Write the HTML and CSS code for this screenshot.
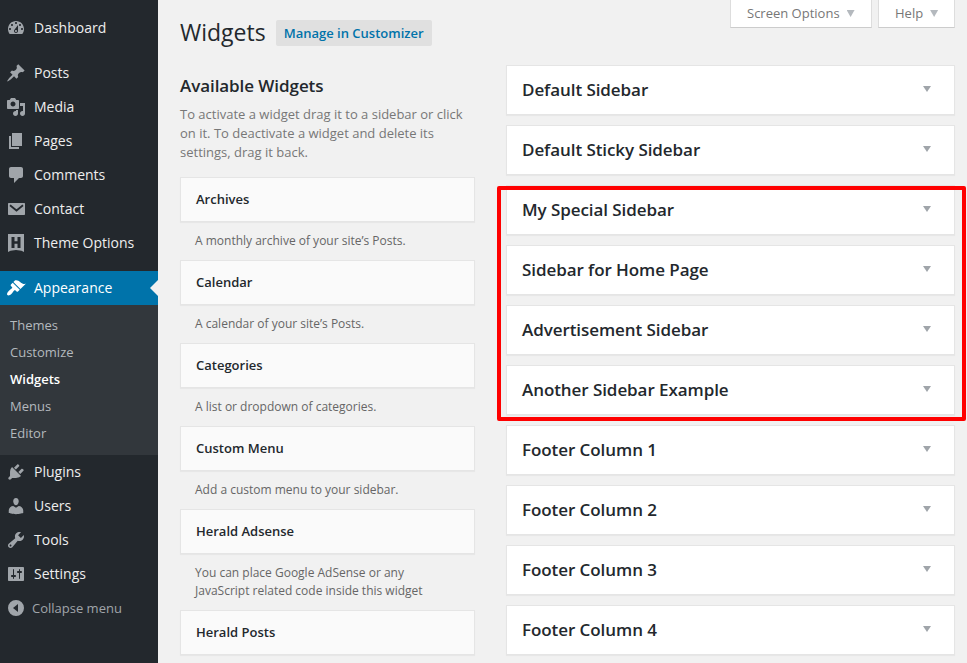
FILE: index.html
```html
<!DOCTYPE html>
<html lang="en">
<head>
<meta charset="utf-8">
<title>Widgets</title>
<link rel="stylesheet" href="styles.css">
</head>
<body>
<div class="admin">
  <nav class="menu">
    <a class="item"><svg viewBox="0 0 20 20"><path fill-rule="evenodd" d="M3.76 16h12.48c1.1-1.37 1.76-3.11 1.76-5 0-4.42-3.58-8-8-8s-8 3.58-8 8c0 1.89.66 3.63 1.76 5zM10 4c.55 0 1 .45 1 1s-.45 1-1 1-1-.45-1-1 .45-1 1-1zM6 6c.55 0 1 .45 1 1s-.45 1-1 1-1-.45-1-1 .45-1 1-1zm8 0c.55 0 1 .45 1 1s-.45 1-1 1-1-.45-1-1 .45-1 1-1zm-5.37 5.55L12 7v6c0 1.1-.9 2-2 2s-2-.9-2-2c0-.57.24-1.08.63-1.45zM4 10c.55 0 1 .45 1 1s-.45 1-1 1-1-.45-1-1 .45-1 1-1zm12 0c.55 0 1 .45 1 1s-.45 1-1 1-1-.45-1-1 .45-1 1-1zm-5 3c0-.55-.45-1-1-1s-1 .45-1 1 .45 1 1 1 1-.45 1-1z"/></svg>Dashboard</a>
    <div class="gap"></div>
    <a class="item"><svg viewBox="0 0 20 20"><path d="M10.44 3.02l1.82-1.82 6.36 6.35-1.83 1.82c-1.05-.68-2.48-.57-3.41.36l-.75.75c-.92.93-1.04 2.35-.35 3.41l-1.83 1.82-2.41-2.41-2.8 2.79c-.42.42-3.38 2.71-3.8 2.29s1.86-3.39 2.28-3.81l2.79-2.79L4.1 9.36l1.83-1.82c1.05.69 2.48.57 3.4-.36l.75-.75c.93-.92 1.05-2.35.36-3.41z"/></svg>Posts</a>
    <a class="item"><svg viewBox="0 0 20 20"><path fill-rule="evenodd" d="M13 11V4c0-.55-.45-1-1-1h-1.67L9 1H5L3.67 3H2c-.55 0-1 .45-1 1v7c0 .55.45 1 1 1h10c.55 0 1-.45 1-1zM7 4.5c1.38 0 2.5 1.12 2.5 2.5S8.38 9.5 7 9.5 4.5 8.38 4.5 7 5.62 4.5 7 4.5zM14 6h5v10.5c0 1.38-1.12 2.5-2.5 2.5S14 17.88 14 16.5s1.12-2.5 2.5-2.5c.17 0 .34.02.5.05V9h-3V6zm-4 8.05V13h2v3.5c0 1.38-1.12 2.5-2.5 2.5S7 17.88 7 16.5 8.12 14 9.5 14c.17 0 .34.02.5.05z"/></svg>Media</a>
    <a class="item"><svg viewBox="0 0 20 20"><path d="M6 15V2h10v13H6zm-1 1h8v2H3V5h2v11z"/></svg>Pages</a>
    <a class="item"><svg viewBox="0 0 20 20"><path d="M5 2h10c1.100 0 2 .9 2 2v7c0 1.100-.9 2-2 2h-2l-5 5v-5H5c-1.100 0-2-.9-2-2V4c0-1.100.9-2 2-2z"/></svg>Comments</a>
    <a class="item"><svg viewBox="0 0 20 20"><path d="M3 4h15c.6 0 1 .4 1 1v10c0 .6-.4 1-1 1H3c-.6 0-1-.4-1-1V5c0-.6.4-1 1-1z"/><path class="cut-line" d="M4 6.300l6.500 5.200L17 6.300"/></svg>Contact</a>
    <a class="item"><svg viewBox="0 0 20 20"><path d="M2 1h16v18l-2.500-1.200L10 17l-5.500.8L2 19z"/><path class="cut" d="M5.500 4h3v4.200h3V4h3v11h-3v-4.300h-3V15h-3z"/></svg>Theme Options</a>
    <div class="gap"></div>
    <a class="item current"><svg viewBox="0 0 20 20"><path d="M14.48 11.06L7.41 3.99l1.5-1.5c.5-.56 2.3-.47 3.51.32 1.21.8 1.43 1.28 2.91 2.1 1.18.64 2.45 1.26 4.45.85zm-.71.71L6.7 4.7 4.93 6.47c-.39.39-.39 1.02 0 1.41l1.06 1.06c.39.39.39 1.03 0 1.42-.6.6-1.43 1.11-2.21 1.69-.35.26-.7.53-1.01.84C1.43 14.23.4 16.08 1.4 17.07c.99 1 2.84-.03 4.18-1.36.31-.31.58-.66.85-1.02.57-.78 1.08-1.61 1.69-2.21.39-.39 1.02-.39 1.41 0l1.06 1.06c.39.39 1.02.39 1.41 0z"/></svg>Appearance</a>
    <div class="submenu">
      <a>Themes</a>
      <a>Customize</a>
      <a class="active">Widgets</a>
      <a>Menus</a>
      <a>Editor</a>
    </div>
    <a class="item"><svg viewBox="0 0 20 20"><path d="M13.11 4.36L9.87 7.6 8 5.73l3.24-3.24c.35-.34 1.05-.2 1.56.32.52.51.66 1.21.31 1.55zm-8 1.77l.91-1.12 9.01 9.01-1.19.84c-.71.71-2.63 1.16-3.82 1.16H6.14L4.9 17.26c-.59.59-1.54.59-2.12 0-.59-.58-.59-1.53 0-2.12l1.24-1.24v-3.88c0-1.13.4-3.19 1.09-3.89zm7.26 3.97l3.24-3.24c.34-.35 1.04-.21 1.55.31.52.51.66 1.21.31 1.55l-3.24 3.25z"/></svg>Plugins</a>
    <a class="item"><svg viewBox="0 0 20 20"><path d="M10 9.25c-2.27 0-2.73-3.44-2.73-3.44C7 4.02 7.82 2 9.970 2c2.160 0 2.980 2.020 2.710 3.810 0 0-.41 3.440-2.680 3.440zm0 2.570L12.720 10c2.390 0 4.520 2.330 4.520 4.530v2.490s-3.650 1.130-7.240 1.130c-3.650 0-7.240-1.130-7.240-1.130v-2.490c0-2.250 1.940-4.480 4.470-4.480z"/></svg>Users</a>
    <a class="item"><svg viewBox="0 0 20 20"><path fill-rule="evenodd" d="M16.68 9.77c-1.34 1.34-3.3 1.67-4.95.99l-5.41 6.52c-.99.99-2.59.99-3.58 0s-.99-2.59 0-3.57l6.52-5.42c-.68-1.65-.35-3.61.99-4.95 1.28-1.28 3.12-1.62 4.72-1.06l-2.89 2.89 2.82 2.82 2.86-2.87c.53 1.58.18 3.39-1.08 4.65zM3.81 16.21c.4.39 1.04.39 1.43 0 .4-.4.4-1.04 0-1.43-.39-.4-1.03-.4-1.43 0-.39.39-.39 1.03 0 1.43z"/></svg>Tools</a>
    <a class="item"><svg viewBox="0 0 20 20"><path fill-rule="evenodd" d="M18 16V4c0-.55-.45-1-1-1H3c-.55 0-1 .45-1 1v12c0 .55.45 1 1 1h14c.55 0 1-.45 1-1zM8 11h1c.55 0 1 .45 1 1s-.45 1-1 1H8v1.5c0 .28-.22.5-.5.5s-.5-.22-.5-.5V13H6c-.55 0-1-.45-1-1s.45-1 1-1h1V5.5c0-.28.22-.5.5-.5s.5.22.5.5V11zm5-2h-1c-.55 0-1-.45-1-1s.45-1 1-1h1V5.5c0-.28.22-.5.5-.5s.5.22.5.5V7h1c.55 0 1 .45 1 1s-.45 1-1 1h-1v5.500c0 .28-.22.5-.5.5s-.5-.22-.5-.5V9z"/></svg>Settings</a>
    <a class="item collapse"><svg viewBox="0 0 20 20"><path fill-rule="evenodd" d="M10 2a8 8 0 1 0 0 16a8 8 0 1 0 0-16zM12 6v8l-5-4z"/></svg>Collapse menu</a>
  </nav>

  <main class="content">
    <section class="available">
      <header class="title">
        <h1>Widgets</h1>
        <a class="customizer">Manage in Customizer</a>
      </header>
      <h2>Available Widgets</h2>
      <p class="intro">To activate a widget drag it to a sidebar or click on it. To deactivate a widget and delete its settings, drag it back.</p>
      <div class="widget">Archives</div>
      <p class="desc">A monthly archive of your site’s Posts.</p>
      <div class="widget">Calendar</div>
      <p class="desc">A calendar of your site’s Posts.</p>
      <div class="widget">Categories</div>
      <p class="desc">A list or dropdown of categories.</p>
      <div class="widget">Custom Menu</div>
      <p class="desc">Add a custom menu to your sidebar.</p>
      <div class="widget">Herald Adsense</div>
      <p class="desc">You can place Google AdSense or any JavaScript related code inside this widget</p>
      <div class="widget">Herald Posts</div>
    </section>

    <section class="sidebars">
      <div class="tabs">
        <a class="tab screen">Screen Options<i class="arrow"></i></a>
        <a class="tab help">Help<i class="arrow"></i></a>
      </div>
      <div class="area">Default Sidebar<i class="arrow"></i></div>
      <div class="area">Default Sticky Sidebar<i class="arrow"></i></div>
      <div class="marked">
        <div class="area">My Special Sidebar<i class="arrow"></i></div>
        <div class="area">Sidebar for Home Page<i class="arrow"></i></div>
        <div class="area">Advertisement Sidebar<i class="arrow"></i></div>
        <div class="area">Another Sidebar Example<i class="arrow"></i></div>
      </div>
      <div class="area">Footer Column 1<i class="arrow"></i></div>
      <div class="area">Footer Column 2<i class="arrow"></i></div>
      <div class="area">Footer Column 3<i class="arrow"></i></div>
      <div class="area">Footer Column 4<i class="arrow"></i></div>
    </section>
  </main>
</div>
</body>
</html>
```
FILE: styles.css
```css
* { box-sizing: border-box; }
body {
  margin: 0;
  background: #f1f1f1;
  font-family: "Open Sans", sans-serif;
  font-size: 13px;
  color: #23282d;
  overflow: hidden;
}
h1, h2, p { margin: 0; }
.admin { display: flex; height: 663px; }

.menu {
  flex: none;
  width: 158px;
  padding-top: 11px;
  background: #23282d;
}
.item {
  display: flex;
  align-items: center;
  gap: 8px;
  height: 34px;
  padding-left: 6px;
  color: #eee;
  font-size: 14px;
  line-height: 18px;
}
.item svg { flex: none; width: 20px; height: 20px; fill: #a0a5aa; }
.item .cut { fill: #23282d; }
.item .cut-line { fill: none; stroke: #23282d; stroke-width: 1.8; }
.gap { height: 11px; }
.current { position: relative; background: #0073aa; color: #fff; }
.current svg { fill: #fff; }
.current::after {
  content: "";
  position: absolute;
  right: 0;
  top: 9px;
  border: 8px solid transparent;
  border-left: 0;
  border-right-color: #f1f1f1;
}
.submenu { height: 150px; padding-top: 7px; background: #32373c; }
.submenu a {
  display: block;
  height: 27px;
  padding-left: 10px;
  line-height: 27px;
  color: #b4b9be;
}
.submenu .active { color: #fff; font-weight: 600; }
.item.collapse { gap: 6px; font-size: 13px; color: #a0a5aa; }

.content { display: flex; flex: 1; gap: 31px; padding-left: 22px; }
.available { width: 295px; flex: none; }
.title { display: flex; gap: 10px; padding-top: 18px; height: 74px; }
h1 { font-size: 23px; font-weight: 400; line-height: 29px; }
.customizer {
  height: 26px;
  margin-top: 2px;
  padding: 0 8px;
  border-radius: 2px;
  background: #e0e0e0;
  color: #0073aa;
  font-weight: 600;
  line-height: 26px;
}
h2 { font-size: 17px; font-weight: 600; line-height: 24px; letter-spacing: -.07px; }
.intro { margin: 7px 0 15px; color: #777; line-height: 19px; }
.widget {
  height: 45px;
  padding-left: 15px;
  border: 1px solid #e5e5e5;
  background: #fafafa;
  box-shadow: 0 1px 1px rgba(0, 0, 0, .04);
  font-weight: 600;
  line-height: 43px;
}
.desc { padding: 10px 15px; font-size: 12px; line-height: 18px; color: #666; }

.sidebars { width: 449px; flex: none; }
.tabs { display: flex; justify-content: flex-end; gap: 6px; height: 65px; }
.tab {
  display: flex;
  gap: 7px;
  height: 28px;
  padding-left: 16px;
  border: 1px solid #ddd;
  border-top: 0;
  border-bottom-color: #ccc;
  background: #fff;
  color: #777;
  line-height: 26px;
}
.screen { width: 142px; }
.help { width: 77px; }
.arrow {
  width: 8px;
  height: 6px;
  margin-bottom: 2px;
  background: #a0a5aa;
  clip-path: polygon(0 0, 100% 0, 50% 100%);
}
.tab .arrow { height: 7px; margin-top: 10px; background: #b4b9be; }
.area {
  display: flex;
  justify-content: space-between;
  align-items: center;
  height: 50px;
  margin-bottom: 10px;
  padding: 0 23px 0 15px;
  border: 1px solid #e5e5e5;
  background: #fff;
  box-shadow: 0 1px 1px rgba(0, 0, 0, .04);
  font-size: 17px;
  font-weight: 600;
  line-height: 24px;
  letter-spacing: -.07px;
}
.marked { position: relative; }
.marked::after {
  content: "";
  position: absolute;
  top: 1px;
  right: -11px;
  bottom: -6px;
  left: -9px;
  border: 4px solid #f00;
  border-radius: 2px;
}
```
